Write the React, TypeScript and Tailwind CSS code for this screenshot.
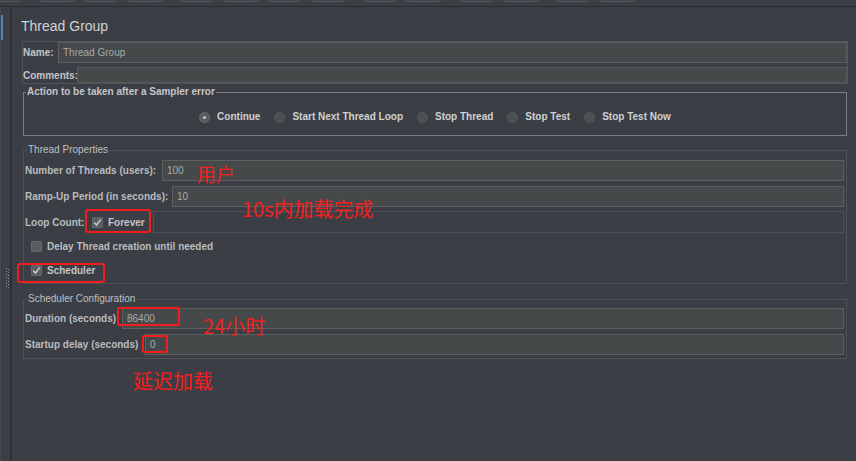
import React from "react";

const sans = "font-['Liberation_Sans',Arial,sans-serif]";
const cjk = "font-['Noto_Sans_CJK_SC','Noto_Sans',sans-serif]";

const buttons = [
  "-ml-[14px] w-[37px]",
  "ml-[16px] w-[36px]",
  "ml-[7px] w-[37px]",
  "ml-[7px] w-[37px]",
  "ml-[15px] w-[37px]",
  "ml-[7px] w-[37px]",
  "ml-[7px] w-[36px]",
  "ml-[8px] w-[36px]",
  "ml-[16px] w-[36px]",
  "ml-[7px] w-[37px]",
  "ml-[16px] w-[37px]",
  "ml-[7px] w-[37px]",
  "ml-[15px] w-[37px]",
  "ml-[7px] w-[37px]",
];

function Check({ checked }: { checked: boolean }) {
  return (
    <div className="w-[11px] h-[11px] shrink-0 rounded-[1px] bg-[#5a5e5f] border border-[#64686a] flex items-center justify-center">
      {checked && (
        <svg width="9" height="9" viewBox="0 0 9 9">
          <path d="M1.2 4.6 L3.5 7 L7.8 1.4" stroke="#c9cbcc" strokeWidth="1.5" fill="none" />
        </svg>
      )}
    </div>
  );
}

function Radio({ label, selected }: { label: string; selected?: boolean }) {
  return (
    <div className="flex items-center gap-[7px]">
      <div
        className={
          "w-[11px] h-[11px] rounded-full flex items-center justify-center border " +
          (selected ? "bg-[#575b5c] border-[#6a6e6f]" : "bg-[#4b5050] border-[#555a5a]")
        }
      >
        {selected && <div className="w-[3px] h-[3px] rounded-full bg-[#c8cacb]" />}
      </div>
      <span className="text-[10px] font-bold text-[#cfd1d3] leading-[12px]">{label}</span>
    </div>
  );
}

function Field({ value, extra }: { value?: string; extra: string }) {
  return (
    <div
      className={
        "h-[21px] flex-1 bg-[#454949] border border-[#5c6061] flex items-center pl-[4px] text-[10px] text-[#a7abab] " +
        extra
      }
    >
      {value}
    </div>
  );
}

export default function App() {
  return (
    <div className={"relative w-[856px] h-[461px] overflow-hidden bg-[#3b3e45] flex flex-col " + sans}>
      {/* top toolbar remnant */}
      <div className="h-[7px] shrink-0 flex items-start overflow-hidden border-b border-[#2a2c30]">
        {buttons.map((b, i) => (
          <div
            key={i}
            className={"shrink-0 h-[20px] -mt-[18px] rounded-[4px] border border-[#56595f] bg-[#3e4148] " + b}
          />
        ))}
      </div>

      <div className="flex flex-1 min-h-0">
        {/* left tree panel edge */}
        <div className="w-[10px] shrink-0 flex flex-col border-l border-[#44474d]">
          <div className="mt-[8px] h-[25px] w-[2px] bg-[#4a86c5]" />
          <div className="mt-[228px] ml-[5px] h-[22px] w-[4px]">
            <svg width="4" height="22" viewBox="0 0 4 22">
              {Array.from({ length: 7 }).map((_, i) => (
                <g key={i}>
                  <rect x="0" y={i * 3} width="1" height="1" fill="#8a8d92" />
                  <rect x="2" y={i * 3 + 1} width="1" height="1" fill="#8a8d92" />
                </g>
              ))}
            </svg>
          </div>
        </div>
        <div className="w-[2px] shrink-0 bg-[#2d2f34]" />

        {/* main panel */}
        <div className="flex-1 flex flex-col pl-[10px] pr-[9px] pt-[11px]">
          <div className="-ml-[1px] h-[17px] leading-[17px] text-[14px] text-[#d0d2d4]">Thread Group</div>

          {/* Name / Comments */}
          <div className="mt-[6px] -mr-[1px] border border-[#50535a] flex flex-col gap-[4px]">
            <div className="flex items-center">
              <span className="w-[35px] shrink-0 text-[10px] font-bold text-[#c3c5c8]">Name:</span>
              <Field value="Thread Group" extra="pl-[4px]" />
            </div>
            <div className="flex items-center">
              <span className="w-[54px] shrink-0 text-[10px] font-bold text-[#c3c5c8]">Comments:</span>
              <div className="h-[16px] flex-1 bg-[#454949] border border-[#55595a]" />
            </div>
          </div>

          {/* Action after sampler error */}
          <fieldset className="mt-[2px] ml-[1px] border border-[#7a7d82] px-0 pb-[11px]">
            <legend className="ml-[2px] px-[1px] text-[10px] font-bold leading-[12px] text-[#c3c5c8]">
              Action to be taken after a Sampler error
            </legend>
            <div className="mt-[12px] h-[14px] flex items-center justify-center gap-[14px]">
              <Radio label="Continue" selected />
              <Radio label="Start Next Thread Loop" />
              <Radio label="Stop Thread" />
              <Radio label="Stop Test" />
              <Radio label="Stop Test Now" />
            </div>
          </fieldset>

          {/* Thread Properties */}
          <fieldset className="mt-[8px] ml-[1px] border border-[#4e5156] pl-[1px] pr-[2px] pb-[6px]">
            <legend className="ml-[2px] px-[1px] text-[10px] leading-[12px] text-[#bdc0c3]">
              Thread Properties
            </legend>
            <div className="mt-[4px] flex items-center">
              <span className="w-[137px] shrink-0 text-[10px] font-bold text-[#b9bcbf]">
                Number of Threads (users):
              </span>
              <Field value="100" extra="" />
            </div>
            <div className="mt-[5px] flex items-center">
              <span className="w-[147px] shrink-0 text-[10px] font-bold text-[#b9bcbf]">
                Ramp-Up Period (in seconds):
              </span>
              <Field value="10" extra="" />
            </div>
            <div className="mt-[4px] h-[22px] flex items-center">
              <span className="w-[67px] shrink-0 text-[10px] font-bold text-[#b9bcbf]">Loop Count:</span>
              <Check checked />
              <span className="ml-[5px] w-[45px] shrink-0 text-[10px] font-bold text-[#c3c5c8]">Forever</span>
              <div className="h-[22px] flex-1 border border-[#4d5054]" />
            </div>
            <div className="mt-[6px] h-[14px] pl-[6px] flex items-center gap-[5px]">
              <Check checked={false} />
              <span className="text-[10px] font-bold text-[#b9bcbf]">Delay Thread creation until needed</span>
            </div>
            <div className="mt-[10px] h-[14px] pl-[6px] flex items-center gap-[5px]">
              <Check checked />
              <span className="text-[10px] font-bold text-[#c3c5c8]">Scheduler</span>
            </div>
          </fieldset>

          {/* Scheduler Configuration */}
          <fieldset className="mt-[9px] ml-[1px] border border-[#4e5156] pl-[1px] pr-[2px] pb-[3px]">
            <legend className="ml-[2px] px-[1px] text-[10px] leading-[12px] text-[#bdc0c3]">
              Scheduler Configuration
            </legend>
            <div className="mt-[3px] flex items-center">
              <span className="w-[97px] shrink-0 text-[10px] font-bold text-[#b9bcbf]">Duration (seconds)</span>
              <Field value="86400" extra="" />
            </div>
            <div className="mt-[5px] flex items-center">
              <span className="w-[120px] shrink-0 text-[10px] font-bold text-[#b9bcbf]">
                Startup delay (seconds)
              </span>
              <Field value="0" extra="" />
            </div>
          </fieldset>
        </div>
      </div>

      {/* red annotations */}
      <div className="absolute left-[85px] top-[209px] w-[66px] h-[24px] border-2 border-[#f41d1d] rounded-[3px]" />
      <div className="absolute left-[17px] top-[263px] w-[88px] h-[20px] border-2 border-[#f41d1d] rounded-[3px]" />
      <div className="absolute left-[117px] top-[307px] w-[63px] h-[19px] border-2 border-[#f41d1d] rounded-[2px]" />
      <div className="absolute left-[142px] top-[335px] w-[26px] h-[18px] border-2 border-[#f41d1d] rounded-[2px]" />

      <div className={"absolute left-[197px] top-[164px] text-[19px] leading-none text-[#f42020] " + cjk}>用户</div>
      <div className={"absolute left-[242px] top-[199px] text-[20px] leading-none text-[#f42020] " + cjk}>
        10s内加载完成
      </div>
      <div className={"absolute left-[203px] top-[316px] text-[20px] leading-none text-[#f42020] " + cjk}>24小时</div>
      <div className={"absolute left-[133px] top-[371px] text-[20px] leading-none text-[#f42020] " + cjk}>延迟加载</div>
    </div>
  );
}
